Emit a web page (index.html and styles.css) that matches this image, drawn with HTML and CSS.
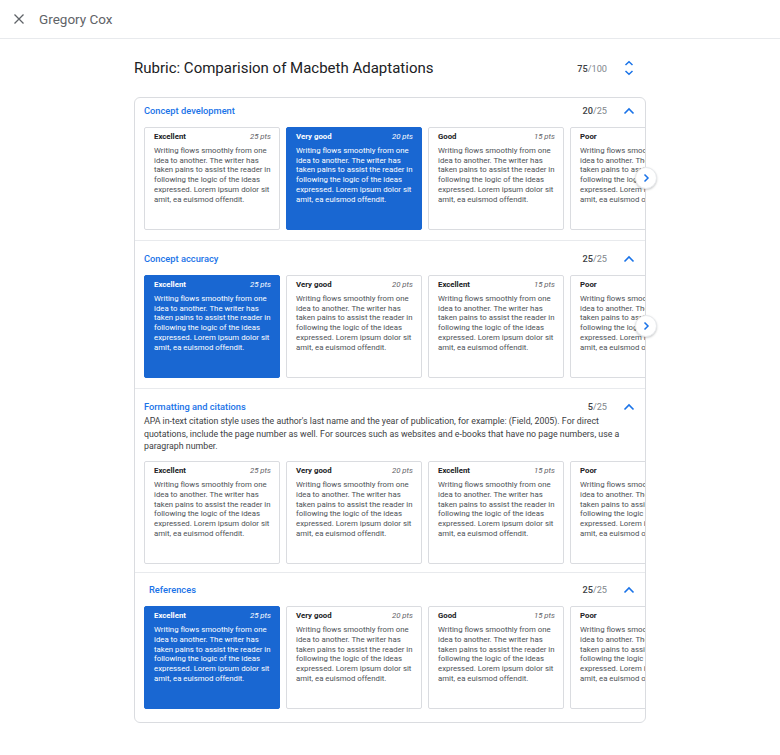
FILE: index.html
```
<!DOCTYPE html>
<html lang="en">
<head>
    <meta charset="UTF-8">
    <title>Rubric</title>
    <link rel="stylesheet" href="styles.css">
</head>
<body>

<header class="topbar">
    <svg class="close-icon" width="12" height="12" viewBox="0 0 12 12"><path d="M1.5 1.5 L10.5 10.5 M10.5 1.5 L1.5 10.5" stroke="#5f6368" stroke-width="1.3" fill="none"/></svg>
    <span class="student">Gregory Cox</span>
</header>

<main class="main">
    <div class="title-row">
        <h1>Rubric: Comparision of Macbeth Adaptations</h1>
        <span class="score"><b>75</b>/100</span>
        <span class="icon-box">
            <svg width="12" height="16" viewBox="0 0 12 16"><path d="M2.5 5 L6 1.8 L9.5 5 M2.5 11 L6 14.2 L9.5 11" stroke="#1a73e8" stroke-width="1.5" fill="none"/></svg>
        </span>
    </div>

    <div class="rubric">
        <section class="criterion first">
            <div class="crit-head">
                <span class="crit-name">Concept development</span>
                <span class="score"><b>20</b>/25</span>
                <span class="icon-box"><svg width="12" height="8" viewBox="0 0 12 8"><path d="M1.5 6.5 L6 2 L10.5 6.5" stroke="#1a73e8" stroke-width="1.6" fill="none"/></svg></span>
            </div>
            <div class="levels">
                <div class="level"><div class="level-head"><span>Excellent</span><i>25 pts</i></div><p>Writing flows smoothly from one idea to another. The writer has taken pains to assist the reader in following the logic of the ideas expressed. Lorem ipsum dolor sit amit, ea euismod offendit.</p></div>
                <div class="level selected"><div class="level-head"><span>Very good</span><i>20 pts</i></div><p>Writing flows smoothly from one idea to another. The writer has taken pains to assist the reader in following the logic of the ideas expressed. Lorem ipsum dolor sit amit, ea euismod offendit.</p></div>
                <div class="level"><div class="level-head"><span>Good</span><i>15 pts</i></div><p>Writing flows smoothly from one idea to another. The writer has taken pains to assist the reader in following the logic of the ideas expressed. Lorem ipsum dolor sit amit, ea euismod offendit.</p></div>
                <div class="level"><div class="level-head"><span>Poor</span><i>5 pts</i></div><p>Writing flows smoothly from one idea to another. The writer has taken pains to assist the reader in following the logic of the ideas expressed. Lorem ipsum dolor sit amit, ea euismod offendit.</p></div>
            </div>
            <button class="next"><svg width="8" height="10" viewBox="0 0 8 10"><path d="M2.5 1.5 L6 5 L2.5 8.5" stroke="#1a73e8" stroke-width="1.5" fill="none"/></svg></button>
        </section>

        <section class="criterion">
            <div class="crit-head">
                <span class="crit-name">Concept accuracy</span>
                <span class="score"><b>25</b>/25</span>
                <span class="icon-box"><svg width="12" height="8" viewBox="0 0 12 8"><path d="M1.5 6.5 L6 2 L10.5 6.5" stroke="#1a73e8" stroke-width="1.6" fill="none"/></svg></span>
            </div>
            <div class="levels">
                <div class="level selected"><div class="level-head"><span>Excellent</span><i>25 pts</i></div><p>Writing flows smoothly from one idea to another. The writer has taken pains to assist the reader in following the logic of the ideas expressed. Lorem ipsum dolor sit amit, ea euismod offendit.</p></div>
                <div class="level"><div class="level-head"><span>Very good</span><i>20 pts</i></div><p>Writing flows smoothly from one idea to another. The writer has taken pains to assist the reader in following the logic of the ideas expressed. Lorem ipsum dolor sit amit, ea euismod offendit.</p></div>
                <div class="level"><div class="level-head"><span>Excellent</span><i>15 pts</i></div><p>Writing flows smoothly from one idea to another. The writer has taken pains to assist the reader in following the logic of the ideas expressed. Lorem ipsum dolor sit amit, ea euismod offendit.</p></div>
                <div class="level"><div class="level-head"><span>Poor</span><i>5 pts</i></div><p>Writing flows smoothly from one idea to another. The writer has taken pains to assist the reader in following the logic of the ideas expressed. Lorem ipsum dolor sit amit, ea euismod offendit.</p></div>
            </div>
            <button class="next"><svg width="8" height="10" viewBox="0 0 8 10"><path d="M2.5 1.5 L6 5 L2.5 8.5" stroke="#1a73e8" stroke-width="1.5" fill="none"/></svg></button>
        </section>

        <section class="criterion with-desc">
            <div class="crit-head">
                <span class="crit-name">Formatting and citations</span>
                <span class="score"><b>5</b>/25</span>
                <span class="icon-box"><svg width="12" height="8" viewBox="0 0 12 8"><path d="M1.5 6.5 L6 2 L10.5 6.5" stroke="#1a73e8" stroke-width="1.6" fill="none"/></svg></span>
            </div>
            <p class="crit-desc">APA in-text citation style uses the author's last name and the year of publication, for example: (Field, 2005). For direct quotations, include the page number as well. For sources such as websites and e-books that have no page numbers, use a paragraph number.</p>
            <div class="levels">
                <div class="level"><div class="level-head"><span>Excellent</span><i>25 pts</i></div><p>Writing flows smoothly from one idea to another. The writer has taken pains to assist the reader in following the logic of the ideas expressed. Lorem ipsum dolor sit amit, ea euismod offendit.</p></div>
                <div class="level"><div class="level-head"><span>Very good</span><i>20 pts</i></div><p>Writing flows smoothly from one idea to another. The writer has taken pains to assist the reader in following the logic of the ideas expressed. Lorem ipsum dolor sit amit, ea euismod offendit.</p></div>
                <div class="level"><div class="level-head"><span>Excellent</span><i>15 pts</i></div><p>Writing flows smoothly from one idea to another. The writer has taken pains to assist the reader in following the logic of the ideas expressed. Lorem ipsum dolor sit amit, ea euismod offendit.</p></div>
                <div class="level"><div class="level-head"><span>Poor</span><i>5 pts</i></div><p>Writing flows smoothly from one idea to another. The writer has taken pains to assist the reader in following the logic of the ideas expressed. Lorem ipsum dolor sit amit, ea euismod offendit.</p></div>
            </div>
        </section>

        <section class="criterion last">
            <div class="crit-head">
                <span class="crit-name indent">References</span>
                <span class="score"><b>25</b>/25</span>
                <span class="icon-box"><svg width="12" height="8" viewBox="0 0 12 8"><path d="M1.5 6.5 L6 2 L10.5 6.5" stroke="#1a73e8" stroke-width="1.6" fill="none"/></svg></span>
            </div>
            <div class="levels">
                <div class="level selected"><div class="level-head"><span>Excellent</span><i>25 pts</i></div><p>Writing flows smoothly from one idea to another. The writer has taken pains to assist the reader in following the logic of the ideas expressed. Lorem ipsum dolor sit amit, ea euismod offendit.</p></div>
                <div class="level"><div class="level-head"><span>Very good</span><i>20 pts</i></div><p>Writing flows smoothly from one idea to another. The writer has taken pains to assist the reader in following the logic of the ideas expressed. Lorem ipsum dolor sit amit, ea euismod offendit.</p></div>
                <div class="level"><div class="level-head"><span>Good</span><i>15 pts</i></div><p>Writing flows smoothly from one idea to another. The writer has taken pains to assist the reader in following the logic of the ideas expressed. Lorem ipsum dolor sit amit, ea euismod offendit.</p></div>
                <div class="level"><div class="level-head"><span>Poor</span><i>5 pts</i></div><p>Writing flows smoothly from one idea to another. The writer has taken pains to assist the reader in following the logic of the ideas expressed. Lorem ipsum dolor sit amit, ea euismod offendit.</p></div>
            </div>
        </section>
    </div>
</main>

</body>
</html>
```

FILE: styles.css
```
* {
    box-sizing: border-box;
}
body {
    margin: 0;
    font-family: Roboto, "Liberation Sans", sans-serif;
    color: #202124;
    background: #fff;
}
.topbar {
    height: 39px;
    border-bottom: 1px solid #e8eaed;
    display: flex;
    align-items: center;
    padding-left: 13px;
}
.close-icon {
    margin-right: 14px;
}
.student {
    font-size: 13.5px;
    color: #5f6368;
}
.main {
    width: 512px;
    margin: 0 auto;
}
.title-row {
    height: 58px;
    display: flex;
    align-items: center;
    padding-right: 5px;
}
.title-row h1 {
    flex: 1;
    margin: 0;
    font-size: 15px;
    font-weight: 400;
    color: #202124;
}
.score {
    font-size: 9.2px;
    color: #80868b;
}
.score b {
    font-weight: 500;
    color: #3c4043;
}
.icon-box {
    width: 24px;
    margin-left: 10px;
    display: flex;
    justify-content: center;
    align-items: center;
}
.rubric {
    border: 1px solid #dadce0;
    border-radius: 6px;
}
.criterion {
    position: relative;
    padding: 9px 0 10px 9px;
    border-top: 1px solid #e8eaed;
}
.criterion.first {
    border-top: none;
    padding-top: 4px;
}
.criterion.with-desc {
    padding-bottom: 8px;
}
.criterion.last {
    padding-top: 8px;
    padding-bottom: 13px;
}
.crit-head {
    height: 17px;
    display: flex;
    align-items: center;
    padding-right: 4px;
    margin-bottom: 8px;
}
.with-desc .crit-head {
    margin-bottom: 0;
}
.crit-name {
    flex: 1;
    font-size: 9.3px;
    font-weight: 500;
    color: #1a73e8;
}
.crit-name.indent {
    padding-left: 5px;
}
.crit-desc {
    margin: 0 10px 8px 0;
    font-size: 8.8px;
    line-height: 12.7px;
    color: #3c4043;
}
.levels {
    display: flex;
    gap: 6px;
    overflow: hidden;
}
.level {
    flex: none;
    width: 136px;
    height: 103px;
    border: 1px solid #dadce0;
    border-radius: 2px;
    padding: 4px 8px 0 9px;
    background: #fff;
}
.level.selected {
    background: #1967d2;
    border-color: #1967d2;
}
.level-head {
    display: flex;
    justify-content: space-between;
    font-size: 7.8px;
    line-height: 10px;
}
.level-head span {
    font-weight: 700;
    color: #202124;
}
.level-head i {
    color: #5f6368;
}
.level p {
    margin: 4px 0 0;
    font-size: 7.8px;
    line-height: 9.7px;
    color: #4d5156;
}
.level.selected .level-head span,
.level.selected .level-head i,
.level.selected p {
    color: #fff;
}
.next {
    position: absolute;
    right: -12px;
    bottom: 51px;
    width: 22px;
    height: 22px;
    border-radius: 50%;
    border: 1px solid #e8eaed;
    background: #fff;
    box-shadow: 0 1px 2px rgba(60, 64, 67, 0.25);
    display: flex;
    align-items: center;
    justify-content: center;
    padding: 0;
}
```
